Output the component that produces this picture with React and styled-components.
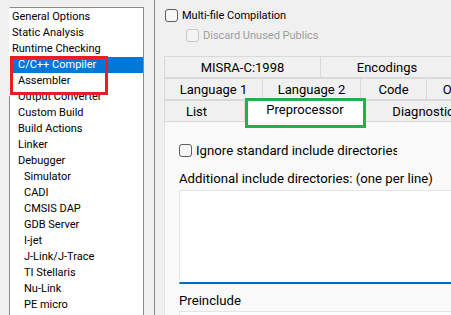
import React from "react";
import styled, { createGlobalStyle } from "styled-components";

const treeItems = [
  { label: "General Options", level: 0 },
  { label: "Static Analysis", level: 0 },
  { label: "Runtime Checking", level: 0 },
  { label: "C/C++ Compiler", level: 1, selected: true },
  { label: "Assembler", level: 1 },
  { label: "Output Converter", level: 1 },
  { label: "Custom Build", level: 1 },
  { label: "Build Actions", level: 1 },
  { label: "Linker", level: 1 },
  { label: "Debugger", level: 1 },
  { label: "Simulator", level: 2 },
  { label: "CADI", level: 2 },
  { label: "CMSIS DAP", level: 2 },
  { label: "GDB Server", level: 2 },
  { label: "I-jet", level: 2 },
  { label: "J-Link/J-Trace", level: 2 },
  { label: "TI Stellaris", level: 2 },
  { label: "Nu-Link", level: 2 },
  { label: "PE micro", level: 2 },
];

const tabRows = [
  [
    { label: "MISRA-C:1998", width: 157 },
    { label: "Encodings", width: 133 },
  ],
  [
    { label: "Language 1", width: 99 },
    { label: "Language 2", width: 98 },
    { label: "Code", width: 66 },
    { label: "Optimizations", width: 113 },
  ],
  [
    { label: "List", width: 81, shift: 16 },
    { label: "Preprocessor", width: 121, active: true },
    { label: "Diagnostics", width: 122 },
  ],
];

const Checkbox = ({ disabled }) => <CheckBoxSquare disabled={disabled} />;

const App = () => {
  return (
    <>
      <GlobalStyle />
      <WindowDiv>
        <SidebarDiv>
          <ListBox>
            {treeItems.map((item) => (
              <TreeRow key={item.label} level={item.level} selected={item.selected}>
                {item.label}
              </TreeRow>
            ))}
          </ListBox>
          <RedMark />
        </SidebarDiv>
        <MainDiv>
          <CheckRow>
            <Checkbox />
            <CheckLabel>Multi-file Compilation</CheckLabel>
          </CheckRow>
          <CheckRow indent disabled>
            <Checkbox disabled />
            <CheckLabel disabled>Discard Unused Publics</CheckLabel>
          </CheckRow>
          <TabsDiv>
            {tabRows.map((row, i) => (
              <TabRow key={i}>
                {row.map((tab) => (
                  <Tab key={tab.label} width={tab.width} active={tab.active} shift={tab.shift}>
                    {tab.label}
                  </Tab>
                ))}
              </TabRow>
            ))}
            <GreenMark />
          </TabsDiv>
          <PageDiv>
            <CheckRow big>
              <Checkbox />
              <ClipLabel>Ignore standard include directories</ClipLabel>
            </CheckRow>
            <FieldLabel>Additional include directories: (one per line)</FieldLabel>
            <TextArea />
            <FieldLabel gap={9}>Preinclude</FieldLabel>
            <TextInput />
          </PageDiv>
        </MainDiv>
      </WindowDiv>
    </>
  );
};

export default App;

const GlobalStyle = createGlobalStyle`
  html, body {
    margin: 0;
    padding: 0;
  }
  body {
    background: #f0f0f0;
    font-family: Roboto, "Noto Sans", sans-serif;
    color: #000;
  }
`;
const WindowDiv = styled.div`
  width: 451px;
  height: 315px;
  display: flex;
  overflow: hidden;
  background: #f0f0f0;
`;
const SidebarDiv = styled.div`
  position: relative;
  width: 155px;
  flex-shrink: 0;
  box-sizing: border-box;
  padding: 7px 0 0 9px;
  border-right: 1px solid #8c8c8c;
`;
const ListBox = styled.div`
  position: relative;
  width: 135px;
  height: 330px;
  box-sizing: border-box;
  padding: 1px 0 0 0;
  background: #fff;
  border: 1px solid #8c8c8c;
  border-left-color: #fff;
  &::before {
    content: "";
    position: absolute;
    left: -1px;
    top: 88px;
    bottom: 0;
    width: 1px;
    background: #8c8c8c;
  }
`;
const TreeRow = styled.div`
  height: 16px;
  line-height: 16px;
  font-size: 11px;
  white-space: nowrap;
  padding-left: ${(p) => 2 + p.level * 6}px;
  background: ${(p) => (p.selected ? "#0078d7" : "transparent")};
  color: ${(p) => (p.selected ? "#fff" : "#000")};
`;
const RedMark = styled.div`
  position: absolute;
  left: 10px;
  top: 56px;
  width: 98px;
  height: 39px;
  box-sizing: border-box;
  border: 3px solid #ed1c24;
`;
const MainDiv = styled.div`
  flex: 1;
  min-width: 0;
  padding: 9px 0 0 9px;
`;
const CheckRow = styled.div`
  display: flex;
  align-items: center;
  gap: 4px;
  height: 13px;
  margin-left: ${(p) => (p.indent ? 22 : p.big ? 0 : 1)}px;
  margin-top: ${(p) => (p.indent ? 7 : 0)}px;
  font-size: ${(p) => (p.big ? 13.2 : 11)}px;
  white-space: nowrap;
`;
const CheckBoxSquare = styled.span`
  width: 13px;
  height: 13px;
  flex-shrink: 0;
  box-sizing: border-box;
  border-radius: 3px;
  border: 1px solid ${(p) => (p.disabled ? "#c8c8c8" : "#5d5d5d")};
  background: ${(p) => (p.disabled ? "#f3f3f3" : "#f7f7f7")};
`;
const CheckLabel = styled.span`
  color: ${(p) => (p.disabled ? "#9d9d9d" : "#000")};
`;
const ClipLabel = styled.span`
  width: 201px;
  overflow: hidden;
  white-space: nowrap;
`;
const TabsDiv = styled.div`
  position: relative;
  margin-top: 14px;
`;
const TabRow = styled.div`
  display: flex;
  height: 22px;
`;
const Tab = styled.div`
  width: ${(p) => p.width}px;
  flex-shrink: 0;
  box-sizing: border-box;
  display: flex;
  align-items: center;
  justify-content: center;
  padding-right: ${(p) => p.shift || 0}px;
  font-size: 13px;
  white-space: nowrap;
  border: 1px solid #d9d9d9;
  border-left: none;
  &:first-child {
    border-left: 1px solid #d9d9d9;
  }
  background: ${(p) => (p.active ? "#fff" : "#f0f0f0")};
  margin-top: ${(p) => (p.active ? -2 : 0)}px;
  height: ${(p) => (p.active ? 24 : 22)}px;
  position: relative;
  z-index: ${(p) => (p.active ? 1 : 0)};
  ${(p) => p.active && "border-bottom: none; padding-bottom: 3px;"}
`;
const GreenMark = styled.div`
  position: absolute;
  left: 81px;
  top: 42px;
  width: 121px;
  height: 30px;
  box-sizing: border-box;
  border: 3px solid #22b14c;
  z-index: 2;
`;
const PageDiv = styled.div`
  height: 200px;
  box-sizing: border-box;
  padding: 22px 0 0 14px;
  background: #f9f9f9;
  border-left: 1px solid #e3e3e3;
  border-top: 1px solid #e3e3e3;
  margin-top: -1px;
`;
const FieldLabel = styled.div`
  margin-top: ${(p) => p.gap || 14}px;
  height: 16px;
  line-height: 16px;
  font-size: 13.2px;
  white-space: nowrap;
`;
const TextArea = styled.div`
  margin-top: 3px;
  width: 320px;
  height: 94px;
  box-sizing: border-box;
  background: #fff;
  border: 1px solid #e5e5e5;
  border-bottom: 2px solid #0067c0;
`;
const TextInput = styled.div`
  margin-top: 2px;
  width: 320px;
  height: 24px;
  box-sizing: border-box;
  background: #fff;
  border: 1px solid #e5e5e5;
`;
